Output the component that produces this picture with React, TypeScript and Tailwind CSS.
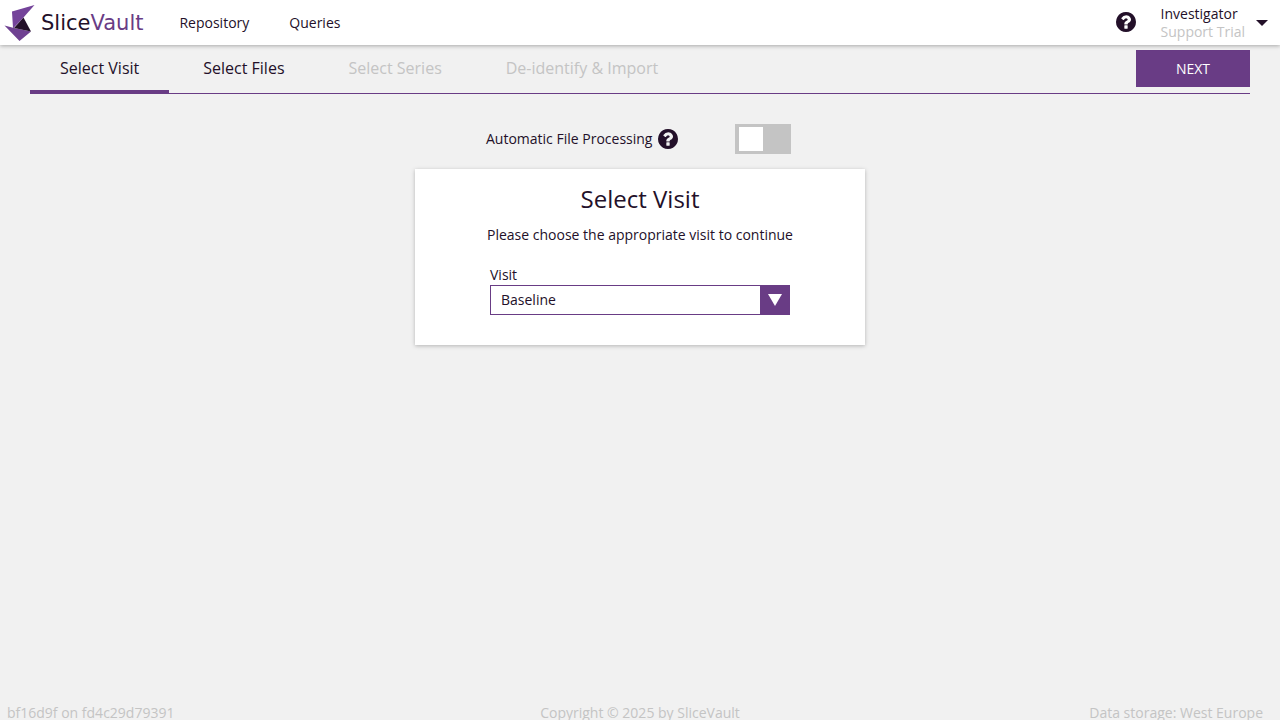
import React, { useState } from 'react'

const navLinks = [
  { label: 'Repository', href: '#repository' },
  { label: 'Queries', href: '#queries' },
]

const steps = [
  { label: 'Select Visit', enabled: true },
  { label: 'Select Files', enabled: true },
  { label: 'Select Series', enabled: false },
  { label: 'De-identify & Import', enabled: false },
]

const visits = ['Baseline', 'Week 12', 'Week 24']

function HelpIcon() {
  return (
    <svg viewBox="128 128 1536 1536" className="h-5 w-5" fill="currentColor" aria-hidden="true">
      <path d="M1024 1376v-192q0-14-9-23t-23-9h-192q-14 0-23 9t-9 23v192q0 14 9 23t23 9h192q14 0 23-9t9-23zm256-672q0-88-55.5-163t-138.5-116-170-41q-243 0-371 213-15 24 8 42l132 100q7 6 19 6 16 0 25-12 53-68 86-92 34-24 86-24 48 0 85.5 26t37.5 59q0 38-20 61t-68 45q-63 28-115.5 86.5t-52.5 125.5v36q0 14 9 23t23 9h192q14 0 23-9t9-23q0-19 21.500-49.500t54.500-49.500q32-18 49-28.500t46-35 44.500-48 28-60.500 12.500-81zm384 192q0 209-103 385.500t-279.500 279.500-385.500 103-385.500-103-279.500-279.500-103-385.500 103-385.500 279.500-279.500 385.500-103 385.500 103 279.500 279.500 103 385.500z" />
    </svg>
  )
}

function Logo() {
  return (
    <a href="#home" className="flex items-center gap-px">
      <svg viewBox="0 0 40 45" className="h-[45px] w-10" aria-hidden="true">
        <path d="M12 11.5L34.5 5L23.5 17.5L13 28.5Z" fill="#74439a" />
        <path d="M4.5 25.5L14 28L31 31.5L19.5 41Z" fill="#6f4192" />
        <path d="M23.5 17.5L31 31.5L14 28Z" fill="#231029" />
      </svg>
      <span className="font-['DejaVu_Sans',sans-serif] text-[21px] leading-[30px]">
        Slice<span className="text-[#693c85]">Vault</span>
      </span>
    </a>
  )
}

function Header() {
  return (
    <header className="relative flex h-[45px] shrink-0 items-center justify-between bg-white shadow-[0_1px_4px_rgba(0,0,0,0.3)]">
      <div className="flex items-center">
        <Logo />
        <nav className="ml-9 flex gap-10">
          {navLinks.map((link) => (
            <a key={link.label} href={link.href}>{link.label}</a>
          ))}
        </nav>
      </div>

      <div className="flex items-center pr-3">
        <button type="button" aria-label="Help" className="mr-[25px] pb-px">
          <HelpIcon />
        </button>
        <button type="button" className="flex items-center gap-[11px] text-left">
          <span className="leading-[18px]">
            <span className="block">Investigator</span>
            <span className="block text-[#c4c4c4]">Support Trial</span>
          </span>
          <svg viewBox="0 0 12 6" className="h-1.5 w-3" fill="currentColor" aria-hidden="true">
            <path d="M0 0h12L6 6z" />
          </svg>
        </button>
      </div>
    </header>
  )
}

export default function App() {
  const [step, setStep] = useState('Select Visit')
  const [visit, setVisit] = useState('Baseline')
  const [automatic, setAutomatic] = useState(false)

  return (
    <div className="flex min-h-screen flex-col bg-[#f1f1f1] font-['Open_Sans',sans-serif] text-sm text-[#231029]">
      <Header />

      {/* Import steps */}
      <div className="mx-[30px] flex h-[49px] items-start justify-between border-b border-[#693c85]">
        <div className="flex gap-1 text-base">
          {steps.map((item) => (
            <button
              key={item.label}
              type="button"
              disabled={!item.enabled}
              onClick={() => setStep(item.label)}
              className={`h-[49px] border-b-4 px-[30px] disabled:text-[#c4c4c4] ${
                step === item.label ? 'border-[#693c85]' : 'border-transparent'
              }`}
            >
              {item.label}
            </button>
          ))}
        </div>
        <button type="button" className="mt-[5px] h-[37px] bg-[#693c85] px-10 text-white">
          NEXT
        </button>
      </div>

      <main className="flex flex-1 flex-col items-center pt-[30px]">
        <div className="mr-[3px] flex w-[305px] items-center justify-between">
          <div className="flex items-center gap-1.5 pb-px">
            <label htmlFor="automatic">Automatic File Processing</label>
            <HelpIcon />
          </div>
          <input
            id="automatic"
            type="checkbox"
            role="switch"
            checked={automatic}
            onChange={(e) => setAutomatic(e.target.checked)}
            className="h-[30px] w-14 appearance-none bg-[#c4c4c4] px-1 py-[3px] before:block before:h-6 before:w-6 before:bg-white checked:bg-[#693c85] checked:before:ml-auto"
          />
        </div>

        <section className="mt-[15px] flex w-full max-w-[450px] flex-col items-center bg-white pt-3.5 pb-[30px] shadow-[0_1px_4px_rgba(0,0,0,0.25)]">
          <h1 className="text-2xl">Select Visit</h1>
          <p className="mt-2.5">Please choose the appropriate visit to continue</p>
          <div className="mt-5 w-[300px]">
            <label htmlFor="visit" className="block">Visit</label>
            <div className="flex border border-[#693c85]">
              <select
                id="visit"
                value={visit}
                onChange={(e) => setVisit(e.target.value)}
                className="h-7 flex-1 appearance-none bg-white px-2.5"
              >
                {visits.map((name) => (
                  <option key={name}>{name}</option>
                ))}
              </select>
              <span className="pointer-events-none flex w-[29px] items-center justify-center bg-[#693c85]">
                <svg viewBox="0 0 14 12" className="h-3 w-3.5" aria-hidden="true">
                  <path d="M0 0h14L7 12z" fill="white" />
                </svg>
              </span>
            </div>
          </div>
        </section>
      </main>

      <footer className="grid grid-cols-[1fr_auto_1fr] px-[7px] leading-[14px] text-[#c4c4c4]">
        <span>bf16d9f on fd4c29d79391</span>
        <span>Copyright © 2025 by SliceVault</span>
        <span className="pr-2.5 text-right">Data storage: West Europe</span>
      </footer>
    </div>
  )
}
